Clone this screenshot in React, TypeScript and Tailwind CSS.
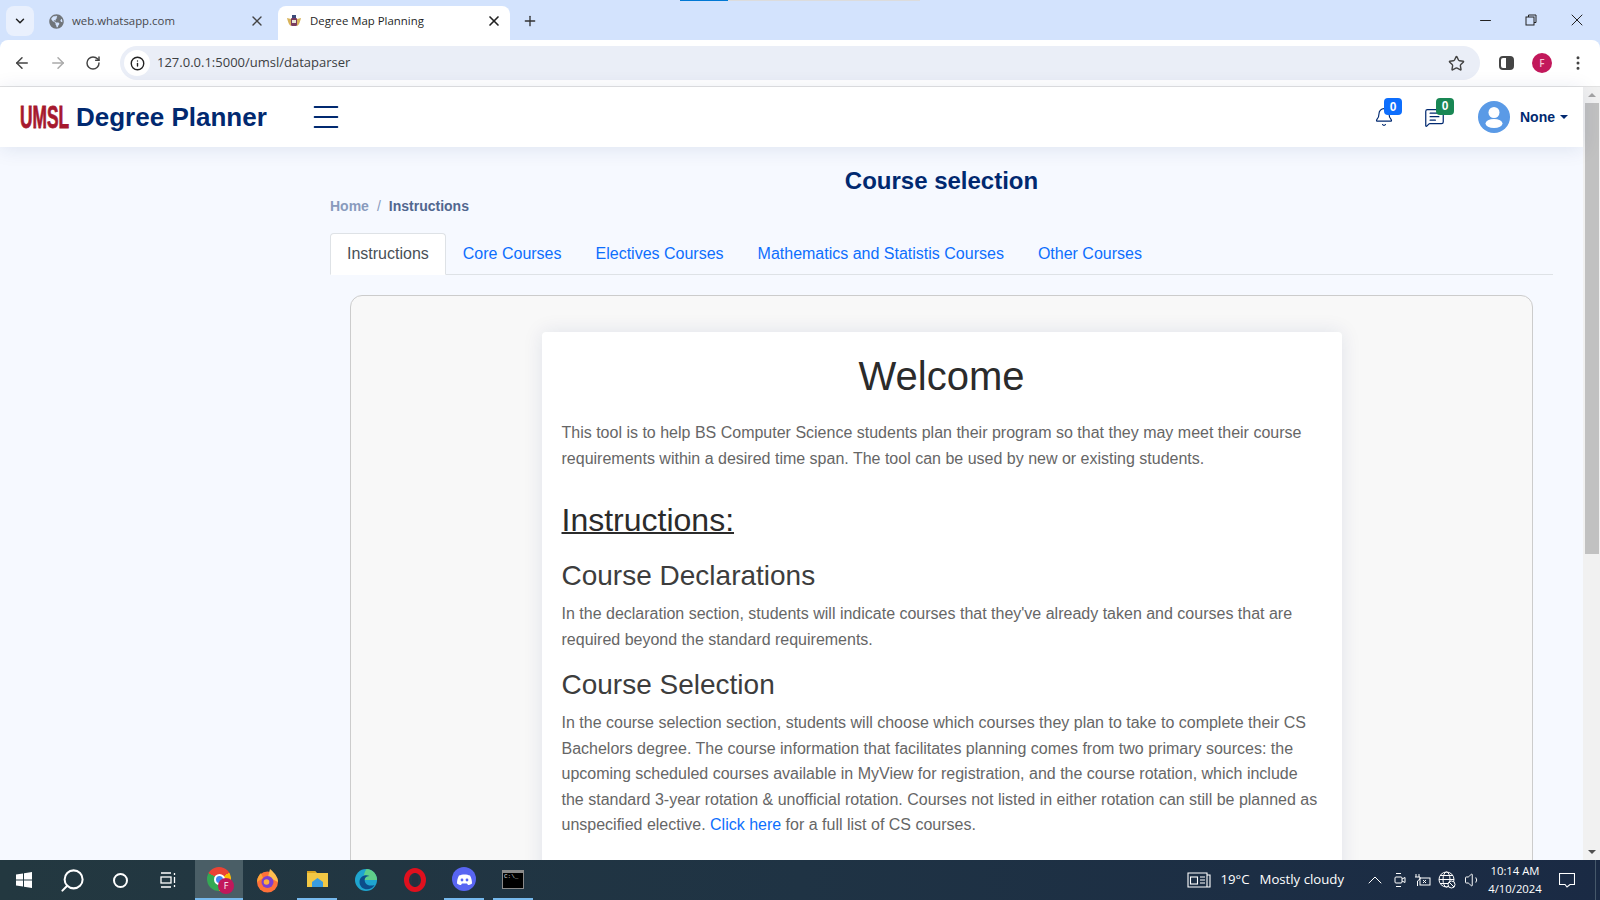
import { ArrowLeft, ArrowRight, RotateCw, Info, Star, EllipsisVertical, X, Plus, ChevronDown, Minus, Bell, MessageSquareText, ChevronUp, Volume1, Search, Menu } from 'lucide-react';
import { FaGlobeAmericas } from 'react-icons/fa';

const page = "font-['Liberation_Sans',Arial,sans-serif]";
const ui = "font-['Open_Sans','Noto_Sans',sans-serif]";

function Favicon() {
  return (
    <svg width="16" height="16" viewBox="0 0 16 16" className="shrink-0">
      <path d="M1 5 C2 9 3 12 5 13 L5 6Z" fill="#d8b35a" />
      <path d="M15 5 C14 9 13 12 11 13 L11 6Z" fill="#d8b35a" />
      <rect x="5" y="5" width="6" height="8" rx="1" fill="#7a3b5e" />
      <rect x="6" y="2" width="4" height="3" fill="#3b4a7a" />
      <rect x="6" y="7" width="4" height="3" fill="#e8e4d8" />
    </svg>
  );
}

function TabStrip() {
  return (
    <div className={`relative h-10 shrink-0 bg-[#d3e3fd] flex items-end ${ui}`}>
      {/* thin progress line at the very top, part of the captured window */}
      <div className="absolute top-0 left-[680px] w-12 h-px bg-[#0078d4]" />
      <div className="absolute top-0 left-[728px] w-[192px] h-px bg-[#dcdcdc]" />

      <div className="w-7 h-[30px] ml-1.5 mb-1 rounded-lg bg-[#e9f0fd] flex items-center justify-center">
        <ChevronDown size={14} strokeWidth={2.5} className="text-[#222]" />
      </div>
      <div className="w-[244px] h-[34px] pl-[15px] pr-[13px] pb-1 flex items-center gap-2 text-[11.400px] text-[#47494d]">
        <FaGlobeAmericas size={15} className="text-[#70757a] shrink-0" />
        <span className="flex-1">web.whatsapp.com</span>
        <X size={16} strokeWidth={2} className="text-[#444]" />
      </div>
      <div className="w-[232px] h-[34px] bg-white rounded-t-lg pl-2 pr-2 pb-1 flex items-center gap-2 text-[11.400px] text-[#1f1f1f]">
        <Favicon />
        <span className="flex-1">Degree Map Planning</span>
        <X size={16} strokeWidth={2.500} className="text-[#222]" />
      </div>
      <div className="w-7 h-[34px] ml-1.5 pb-1 flex items-center justify-center">
        <Plus size={16} strokeWidth={2} className="text-[#333]" />
      </div>

      <div className="ml-auto h-10 flex items-center text-[#222]">
        <div className="w-[46px] flex justify-center"><Minus size={17} strokeWidth={1.500} /></div>
        <div className="w-[46px] flex justify-center">
          <svg width="12" height="12" viewBox="0 0 12 12" fill="none" stroke="currentColor">
            <rect x="1" y="3" width="8" height="8" />
            <path d="M3.500 3V1H11V8.500H9" />
          </svg>
        </div>
        <div className="w-[46px] flex justify-center"><X size={20} strokeWidth={1.200} /></div>
      </div>
    </div>
  );
}

function Toolbar() {
  return (
    <div className={`h-[47px] shrink-0 bg-white border-b border-[#e2e2e2] rounded-t-lg flex items-center ${ui}`}>
      <div className="w-[120px] shrink-0 flex items-center pl-[13px] gap-[18px]">
        <ArrowLeft size={18} strokeWidth={2} className="text-[#444]" />
        <ArrowRight size={18} strokeWidth={2} className="text-[#aaa]" />
        <RotateCw size={16} strokeWidth={2.200} className="text-[#444]" />
      </div>
      <div className="w-[1360px] h-[34px] rounded-full bg-[#eaeef7] flex items-center pl-1 pr-[15px]">
        <div className="w-[26px] h-[26px] rounded-full bg-white flex items-center justify-center">
          <Info size={15} strokeWidth={2.200} className="text-[#222]" />
        </div>
        <span className="ml-[7px] text-[13px] text-[#3c4043]">127.0.0.1:5000/umsl/dataparser</span>
        <Star size={17} strokeWidth={2} className="ml-auto text-[#444]" />
      </div>
      <div className="w-[15px] h-[14px] ml-[19px] rounded-sm border-2 border-[#444] flex justify-end">
        <div className="w-[6px] bg-[#444]" />
      </div>
      <div className="w-5 h-5 ml-[18px] rounded-full bg-[#c2185b] text-[#f4c6d6] text-[10px] font-semibold flex items-center justify-center">F</div>
      <EllipsisVertical size={18} className="ml-[17px] text-[#444]" />
    </div>
  );
}

function NavBar() {
  return (
    <header className={`relative z-10 h-[60px] shrink-0 bg-white shadow-[0_2px_20px_rgba(1,41,112,0.1)] flex items-center ${page}`}>
      <span className="ml-5 w-[50px] text-[31px] leading-none font-bold text-[#a6192e] [-webkit-text-stroke:0.8px_#a6192e] scale-x-[0.56] origin-left whitespace-nowrap">UMSL</span>
      <span className="ml-[6px] text-[26px] font-bold text-[#012970] leading-none">Degree Planner</span>
      <Menu size={34} strokeWidth={1.400} className="ml-[42px] -mt-px text-[#012970]" />

      <div className="ml-auto flex items-center pr-[15px] text-[#012970]">
        <div className="relative">
          <Bell size={20} strokeWidth={1.400} />
          <span className="absolute -top-[9px] left-[10px] w-[18px] h-[17px] rounded bg-[#0d6efd] text-white text-xs font-bold flex items-center justify-center">0</span>
        </div>
        <div className="relative ml-[30px]">
          <MessageSquareText size={21} strokeWidth={1.400} />
          <span className="absolute -top-[9px] left-[12px] w-[18px] h-[17px] rounded bg-[#198754] text-white text-xs font-bold flex items-center justify-center">0</span>
        </div>
        <svg width="32" height="32" viewBox="0 0 32 32" className="ml-[33px]">
          <circle cx="16" cy="16" r="16" fill="#5a9ae6" />
          <circle cx="16" cy="11.500" r="5.500" fill="#fff" />
          <ellipse cx="16" cy="22.500" rx="8.500" ry="4.500" fill="#fff" />
        </svg>
        <span className="ml-[10px] text-sm font-bold">None</span>
        <span className="ml-[5px] border-x-4 border-t-4 border-x-transparent border-t-[#012970]" />
      </div>
    </header>
  );
}

const tabs = ['Core Courses', 'Electives Courses', 'Mathematics and Statistis Courses', 'Other Courses'];

function Content() {
  return (
    <main className={`flex-1 min-w-0 overflow-hidden pl-[330px] pr-[30px] ${page}`}>
      <h1 className="pt-[19px] text-2xl font-bold leading-[29px] text-[#012970] text-center">Course selection</h1>
      <nav className="h-[21px] flex items-center text-sm font-semibold text-[#899bbd]">
        <span>Home</span>
        <span className="mx-2 font-normal">/</span>
        <span className="text-[#51678f]">Instructions</span>
      </nav>
      <div className="mt-[17px] flex h-[42px] border-b border-[#dee2e6] text-base leading-6">
        <div className="h-[42px] px-4 py-2 bg-white border border-[#dee2e6] border-b-white rounded-t text-[#495057]">Instructions</div>
        {tabs.map(t => (
          <div key={t} className="px-[17px] py-[9px] text-[#0d6efd]">{t}</div>
        ))}
      </div>

      <section className="mt-5 mx-[20px] h-[700px] pt-9 bg-[#f8f8f8] border border-[#ccc] rounded-xl flex justify-center">
        <article className="w-[800px] h-[660px] px-5 bg-white rounded shadow-[0_0_20px_rgba(1,41,112,0.1)] text-base leading-[25.500px] text-[#666]">
          <h2 className="pt-5 text-[40px] leading-[48px] text-center text-[#2b2b2b]">Welcome</h2>
          <p className="mt-5">This tool is to help BS Computer Science students plan their program so that they may meet their course requirements within a desired time span. The tool can be used by new or existing students.</p>
          <h3 className="mt-[30px] text-[32px] leading-[38px] underline decoration-2 text-[#2b2b2b]">Instructions:</h3>
          <h4 className="mt-5 text-[28px] leading-[34px] text-[#3d3d3d]">Course Declarations</h4>
          <p className="mt-[8px]">In the declaration section, students will indicate courses that they've already taken and courses that are required beyond the standard requirements.</p>
          <h4 className="mt-[16px] text-[28px] leading-[34px] text-[#3d3d3d]">Course Selection</h4>
          <p className="mt-[8px]">In the course selection section, students will choose which courses they plan to take to complete their CS Bachelors degree. The course information that facilitates planning comes from two primary sources: the upcoming scheduled courses available in MyView for registration, and the course rotation, which include the standard 3-year rotation &amp; unofficial rotation. Courses not listed in either rotation can still be planned as unspecified elective. <span className="text-[#0d6efd]">Click here</span> for a full list of CS courses.</p>
        </article>
      </section>
    </main>
  );
}

function Scrollbar() {
  return (
    <div className="w-[17px] shrink-0 bg-[#f1f1f1] flex flex-col items-center">
      <div className="h-4 flex items-center"><span className="border-x-4 border-b-4 border-x-transparent border-b-[#a3a3a3]" /></div>
      <div className="w-[14px] h-[451px] bg-[#c1c1c1]" />
      <div className="mt-auto h-4 flex items-center"><span className="border-x-4 border-t-4 border-x-transparent border-t-[#505050]" /></div>
    </div>
  );
}

function Taskbar() {
  return (
    <div className={`h-10 shrink-0 bg-gradient-to-r from-[#233840] via-[#1f3344] to-[#1a2a44] flex items-center text-white ${ui}`}>
      <div className="w-12 flex justify-center">
        <svg width="16" height="16" viewBox="0 0 16 16" fill="#fff"><path d="M0 2.500 7 1.500V7.500H0ZM8 1.300 16 0V7.500H8ZM0 8.500H7V14.500L0 13.500ZM8 8.500H16V16L8 14.700Z" /></svg>
      </div>
      <div className="w-12 flex justify-center">
        <Search size={27} strokeWidth={1.800} className="-scale-x-100" />
      </div>
      <div className="w-[48px] flex justify-center"><div className="w-[15px] h-[15px] rounded-full border-2 border-white" /></div>
      <div className="w-[48px] flex justify-center">
        <svg width="16" height="16" viewBox="0 0 16 16" fill="none" stroke="#fff" strokeWidth="1.300"><path d="M1 1H11M1 15H11" /><rect x="1" y="5" width="10" height="6" /><path d="M14.500 1V3M14.500 5V11M14.500 13V15" /></svg>
      </div>

      <div className="w-12 h-10 ml-[3px] bg-[#4a5e66] border-b-2 border-[#76b9ed] flex justify-center items-center">
        <div className="relative w-6 h-6 rounded-full bg-[conic-gradient(from_-60deg,#ea4335_0_33%,#fbbc05_33%_66%,#34a853_66%_100%)] flex items-center justify-center">
          <div className="w-[11px] h-[11px] rounded-full bg-[#4285f4] border-2 border-white" />
          <span className="absolute -right-[3px] -bottom-[3px] w-4 h-4 rounded-full bg-[#c2185b] text-[9px] flex items-center justify-center">F</span>
        </div>
      </div>
      <div className="w-12 h-10 flex justify-center items-center">
        <svg width="23" height="25" viewBox="0 0 23 25"><circle cx="11.500" cy="14" r="10.500" fill="#ff7139" /><path d="M14 1 C19 5 22 10 22 14 L12 9Z" fill="#ffbd4f" /><path d="M1 14C1 10 3 7 5 5L7 10Z" fill="#ffa436" /><circle cx="11.500" cy="14" r="6" fill="#7b3fd1" /><circle cx="10.500" cy="14" r="2.800" fill="#ffb03b" /></svg>
      </div>
      <div className="w-10 h-10 ml-1.5 border-b-2 border-[#76b9ed] flex justify-center items-center">
        <svg width="21" height="18" viewBox="0 0 21 18"><path d="M0 1H8L10 3H21V17H0Z" fill="#f2c744" /><path d="M0 1H8L9 3H0Z" fill="#d9a321" /><path d="M5 12 10.500 8 16 12V17H5Z" fill="#3a9ce0" /></svg>
      </div>
      <div className="w-12 h-10 ml-[5px] flex justify-center items-center">
        <svg width="24" height="24" viewBox="0 0 23 24"><circle cx="11.500" cy="12" r="11" fill="#1fa5cf" /><path d="M12 1C18 1 22.500 6 22.500 12H9C9 7 10 4 12 1Z" fill="#5fd08a" /><path d="M5 14C5 8 11 6 15 8C11 8 9 11 11 15C13 18 17 18 20 17C16 24 5 22 5 14Z" fill="#0c4d8a" /></svg>
      </div>
      <div className="w-[49px] h-10 flex justify-center items-center">
        <div className="w-[22px] h-6 rounded-[50%] border-[5px] border-[#e0101e] flex justify-center"><div className="w-[6px] rounded-[50%] bg-[#233040]" /></div>
      </div>
      <div className="w-10 h-10 ml-[5px] border-b-2 border-[#76b9ed] flex justify-center items-center">
        <div className="w-6 h-6 rounded-full bg-[#5865f2] flex items-center justify-center">
          <svg width="15" height="11" viewBox="0 0 15 11"><path d="M2 1.500C5 0 10 0 13 1.500C14.500 4 15 7 15 9.500C13.500 10.500 12 11 11 11L10 9.500H5L4 11C3 11 1.500 10.500 0 9.500C0 7 .500 4 2 1.500Z" fill="#fff" /><circle cx="5" cy="6" r="1.400" fill="#5865f2" /><circle cx="10" cy="6" r="1.400" fill="#5865f2" /></svg>
        </div>
      </div>
      <div className="w-10 h-10 ml-[9px] border-b-2 border-[#76b9ed] flex justify-center items-center">
        <div className="w-[22px] h-[19px] bg-black border border-[#8a8a8a] border-t-[3px] text-[6px] leading-[8px] pl-[1px] text-[#ddd] font-mono">C:\_</div>
      </div>

      <div className="ml-auto flex items-center">
        <svg width="24" height="16" viewBox="0 0 24 16" fill="none" stroke="#fff" strokeWidth="1.100"><path d="M1 1H20V15H1ZM20 3H23V15H20" /><rect x="3.500" y="5" width="7" height="7" /><path d="M13 5H18M13 8H18M13 11H18" /></svg>
        <span className="ml-[9px] text-[13.200px]">19°C</span>
        <span className="ml-[10px] text-[13.200px]">Mostly cloudy</span>
        <ChevronUp size={24} strokeWidth={1} className="ml-[19px]" />
        <svg width="12" height="16" viewBox="0 0 12 16" fill="none" stroke="#fff" className="ml-[7px]"><path d="M2 1.500H7M2 14.500H7" /><rect x="1" y="5" width="7" height="6" rx="1" /><path d="M8 7 11 5.500V10.500L8 9" /></svg>
        <svg width="16" height="14" viewBox="0 0 16 14" fill="none" stroke="#fff" className="ml-[9px]"><path d="M1 1V4M4 1V4M0 4H5V6L2.500 8V13" /><rect x="5" y="5" width="10" height="7" /><path d="M8 7 11 10M11 7 8 10" /></svg>
        <svg width="18" height="18" viewBox="0 0 18 18" fill="none" stroke="#fff" className="ml-[7px]">
          <circle cx="8.500" cy="8.500" r="7.500" />
          <ellipse cx="8.500" cy="8.500" rx="3.500" ry="7.500" />
          <path d="M1 8.500H16M2 4.500H15M2 12.500H11" />
          <circle cx="13.500" cy="13.500" r="3.500" fill="#1c2d44" />
          <path d="M11 11 16 16" />
        </svg>
        <Volume1 size={18} strokeWidth={1.300} className="ml-[8px]" />
        <div className="w-[68px] -ml-px text-[11.300px] leading-[18px] text-center">
          <div>10:14 AM</div>
          <div>4/10/2024</div>
        </div>
        <div className="w-9 flex justify-center">
          <svg width="16" height="15" viewBox="0 0 16 15" fill="none" stroke="#fff" strokeWidth="1.100"><path d="M.500.500H15.500V11.500H11L8 14 6 11.500H.500Z" /></svg>
        </div>
        <div className="w-[5px] h-10 ml-[10px] border-l border-[#46586a]" />
      </div>
    </div>
  );
}

export default function App() {
  return (
    <div className="w-full h-[900px] overflow-hidden flex flex-col bg-[#d3e3fd]">
      <TabStrip />
      <Toolbar />
      <div className="flex-1 min-h-0 flex bg-[#f6f9ff]">
        <div className="flex-1 min-w-0 flex flex-col">
          <NavBar />
          <Content />
        </div>
        <Scrollbar />
      </div>
      <Taskbar />
    </div>
  );
}
